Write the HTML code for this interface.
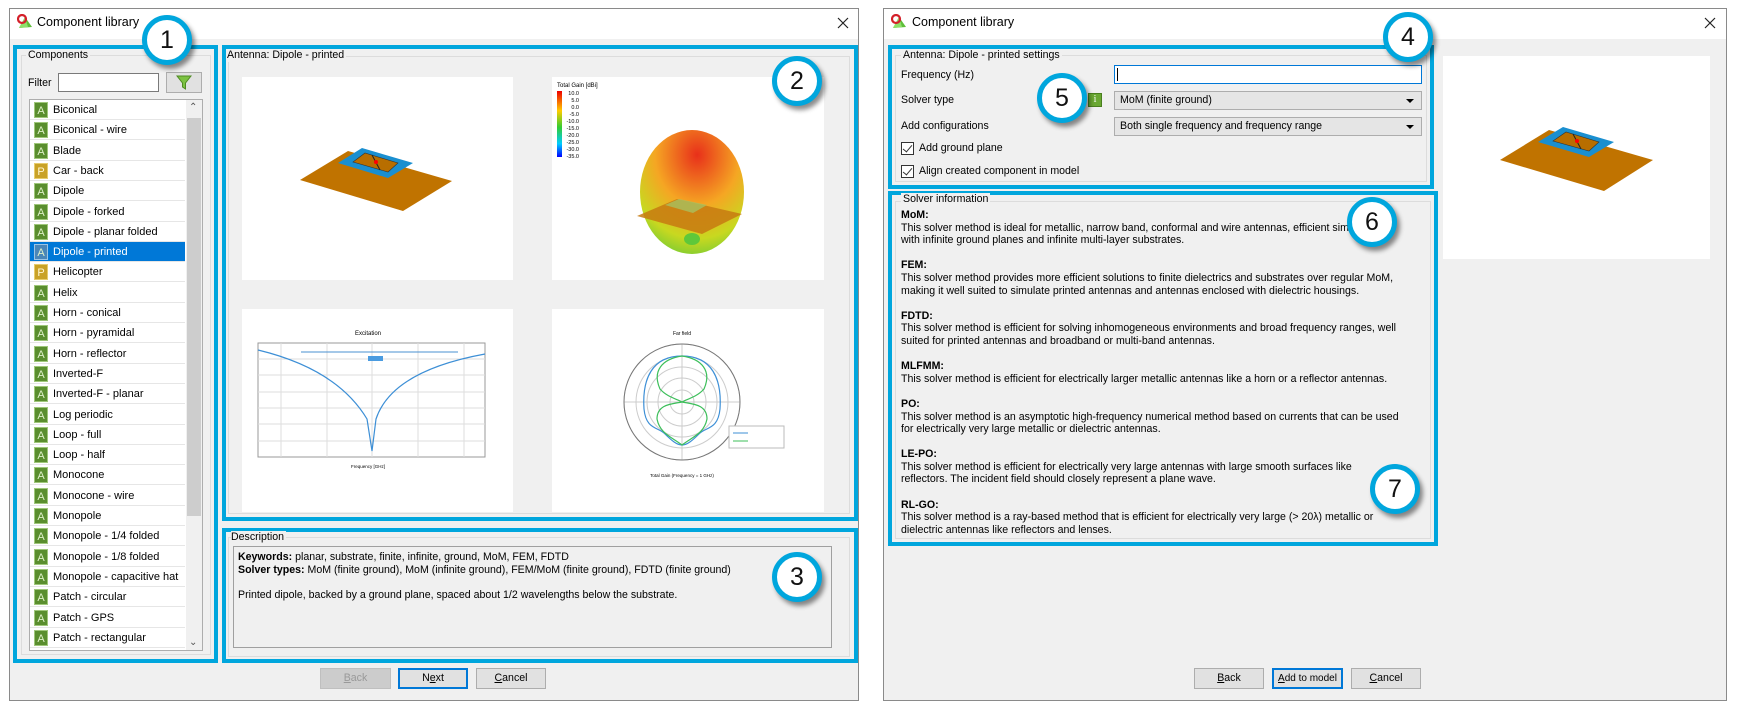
<!DOCTYPE html>
<html><head><meta charset="utf-8"><style>
*{box-sizing:border-box;margin:0;padding:0}
body{width:1741px;height:712px;background:#fff;position:relative;overflow:hidden;font-family:"Liberation Sans",sans-serif;font-size:10.6px;color:#000}
.a{position:absolute}
.t{position:absolute;white-space:nowrap;line-height:13px}
.win{position:absolute;background:#f0f0f0;border:1px solid #8a8a8a}
.tb{position:absolute;left:0;right:0;top:0;height:30px;background:#fff}
.blue{position:absolute;border:4px solid #00a6dd}
.grp{position:absolute;border:1px solid #dcdcdc}
.circ{position:absolute;width:50px;height:50px;border-radius:50%;background:#fff;border:5px solid #00a6dd;box-shadow:3px 4px 5px rgba(0,0,0,.45);font-size:25px;text-align:center;line-height:40px;color:#111}
.btn{position:absolute;height:21px;border:1px solid #adadad;background:#e1e1e1;text-align:center;line-height:19px;font-size:10.6px;white-space:nowrap}
.panel{position:absolute;background:#fff}
.row{position:absolute;left:30px;width:155px;height:20px;border-bottom:1px solid #e6e6e6;background:#fff}
.row i{position:absolute;left:4px;top:2px;width:14px;height:16px;background:#5a8e2e;color:#dff0c8;font-style:normal;font-size:11px;text-align:center;line-height:16px;border:1px solid #9fc77a}
.row i.p{background:#c9a227;border-color:#e6cc6c;color:#fff6d0}
.row span{position:absolute;left:23px;top:4px;white-space:nowrap;font-size:11px}
.combo{position:absolute;height:19px;background:#e5e5e5;border:1px solid #adadad;padding-left:5px;line-height:17px}
.combo:after{content:"";position:absolute;right:7px;top:7px;border-left:4px solid transparent;border-right:4px solid transparent;border-top:4px solid #000}
.cb{position:absolute;width:13px;height:13px;border:1px solid #333;background:#fff}
.cb:after{content:"";position:absolute;left:3px;top:0px;width:4px;height:8px;border-right:1.5px solid #333;border-bottom:1.5px solid #333;transform:rotate(40deg)}
b{font-weight:bold}
</style></head><body>

<!-- LEFT WINDOW -->
<div class="win" style="left:9px;top:8px;width:850px;height:693px">
 <div class="tb"></div>
</div>
<svg class="a" style="left:17px;top:14px" width="16" height="16" viewBox="0 0 16 16"><polygon points="8,3 15,13 2,14" fill="#5fbf3a"/><polygon points="8,3 11,13 2,14" fill="#8ee06a"/><circle cx="5" cy="5" r="4" fill="none" stroke="#d4202a" stroke-width="2.2"/></svg>
<div class="t" style="left:37px;top:16px;font-size:12.5px">Component library</div>
<svg class="a" style="left:837px;top:17px" width="12" height="12"><path d="M1 1L11 11M11 1L1 11" stroke="#222" stroke-width="1.2"/></svg>

<div class="blue" style="left:13px;top:45px;width:205px;height:618px"></div>
<div class="grp" style="left:21px;top:55px;width:190px;height:600px"></div>
<div class="t" style="left:26px;top:49px;background:#f0f0f0;padding:0 2px">Components</div>
<div class="t" style="left:28px;top:77px">Filter</div>
<div class="a" style="left:58px;top:73px;width:101px;height:19px;background:#fff;border:1px solid #7a7a7a"></div>
<div class="a" style="left:166px;top:72px;width:36px;height:21px;background:#e1e1e1;border:1px solid #adadad"></div>
<svg class="a" style="left:176px;top:74px" width="16" height="17" viewBox="0 0 16 17"><path d="M1 2 H15 L9.5 9 V15 L6.5 13 V9 Z" fill="#7cc242" stroke="#4e8a22" stroke-width="1"/></svg>

<div class="a" style="left:29px;top:99px;width:174px;height:552px;background:#fff;border:1px solid #adadad"></div>
<div class="a" style="left:186px;top:100px;width:16px;height:550px;background:#f0f0f0"></div>
<div class="a" style="left:187px;top:118px;width:14px;height:398px;background:#cdcdcd"></div>
<div class="t" style="left:189px;top:101px;font-size:10px;color:#555">⌃</div>
<div class="t" style="left:189px;top:636px;font-size:10px;color:#555">⌄</div>

<div class="row" style="top:100px"><i>A</i><span>Biconical</span></div>
<div class="row" style="top:120.3px"><i>A</i><span>Biconical - wire</span></div>
<div class="row" style="top:140.6px"><i>A</i><span>Blade</span></div>
<div class="row" style="top:160.9px"><i class="p">P</i><span>Car - back</span></div>
<div class="row" style="top:181.2px"><i>A</i><span>Dipole</span></div>
<div class="row" style="top:201.5px"><i>A</i><span>Dipole - forked</span></div>
<div class="row" style="top:221.8px"><i>A</i><span>Dipole - planar folded</span></div>
<div class="row" style="top:242.1px;background:#0078d7;color:#fff"><i style="background:#4a86b8;border-color:#9cc4e4">A</i><span>Dipole - printed</span></div>
<div class="row" style="top:262.4px"><i class="p">P</i><span>Helicopter</span></div>
<div class="row" style="top:282.7px"><i>A</i><span>Helix</span></div>
<div class="row" style="top:303px"><i>A</i><span>Horn - conical</span></div>
<div class="row" style="top:323.3px"><i>A</i><span>Horn - pyramidal</span></div>
<div class="row" style="top:343.6px"><i>A</i><span>Horn - reflector</span></div>
<div class="row" style="top:363.9px"><i>A</i><span>Inverted-F</span></div>
<div class="row" style="top:384.2px"><i>A</i><span>Inverted-F - planar</span></div>
<div class="row" style="top:404.5px"><i>A</i><span>Log periodic</span></div>
<div class="row" style="top:424.8px"><i>A</i><span>Loop - full</span></div>
<div class="row" style="top:445.1px"><i>A</i><span>Loop - half</span></div>
<div class="row" style="top:465.4px"><i>A</i><span>Monocone</span></div>
<div class="row" style="top:485.7px"><i>A</i><span>Monocone - wire</span></div>
<div class="row" style="top:506px"><i>A</i><span>Monopole</span></div>
<div class="row" style="top:526.3px"><i>A</i><span>Monopole - 1/4 folded</span></div>
<div class="row" style="top:546.6px"><i>A</i><span>Monopole - 1/8 folded</span></div>
<div class="row" style="top:566.9px"><i>A</i><span>Monopole - capacitive hat</span></div>
<div class="row" style="top:587.2px"><i>A</i><span>Patch - circular</span></div>
<div class="row" style="top:607.5px"><i>A</i><span>Patch - GPS</span></div>
<div class="row" style="top:627.8px"><i>A</i><span>Patch - rectangular</span></div>

<div class="blue" style="left:222px;top:45px;width:636px;height:476px"></div>
<div class="grp" style="left:228px;top:56px;width:622px;height:458px"></div>
<div class="t" style="left:227px;top:49px;background:#f0f0f0;padding-right:2px">Antenna: Dipole - printed</div>

<div class="panel" style="left:242px;top:77px;width:271px;height:203px">
<svg width="271" height="203"><polygon points="58,103 106,74 210,104 161,134" fill="#c07300"/><polygon points="96,86 120,71 171,86 146,101" fill="#1a8fd0"/><polygon points="111,85 123,76 156,86 146,95" fill="#b86e00" stroke="#333" stroke-width=".6"/><line x1="130" y1="78" x2="138" y2="93" stroke="#222"/><circle cx="134" cy="85" r="2" fill="red"/></svg></div>
<div class="panel" style="left:552px;top:77px;width:272px;height:203px">
<svg width="272" height="203"><defs><linearGradient id="cb" x1="0" y1="0" x2="0" y2="1"><stop offset="0" stop-color="#e00"/><stop offset=".3" stop-color="#fc0"/><stop offset=".55" stop-color="#3c3"/><stop offset=".8" stop-color="#0cf"/><stop offset="1" stop-color="#00f"/></linearGradient><radialGradient id="bl" cx=".55" cy=".2" r=".9"><stop offset="0" stop-color="#e8301a"/><stop offset=".45" stop-color="#f5a623"/><stop offset=".75" stop-color="#c8d820"/><stop offset="1" stop-color="#5ec83a"/></radialGradient></defs>
<text x="5" y="10" font-size="6" font-family="Liberation Sans">Total Gain [dBi]</text>
<rect x="5" y="14" width="5" height="66" fill="url(#cb)"/>
<g font-size="5.5" font-family="Liberation Sans" text-anchor="end"><text x="27" y="18">10.0</text><text x="27" y="25">5.0</text><text x="27" y="32">0.0</text><text x="27" y="39">-5.0</text><text x="27" y="46">-10.0</text><text x="27" y="53">-15.0</text><text x="27" y="60">-20.0</text><text x="27" y="67">-25.0</text><text x="27" y="74">-30.0</text><text x="27" y="81">-35.0</text></g>
<ellipse cx="140" cy="115" rx="52" ry="62" fill="url(#bl)"/>
<ellipse cx="140" cy="162" rx="8" ry="6" fill="#5ec83a"/>
<polygon points="85,139 125,122 190,137 150,157" fill="#c77a10" opacity=".85"/>
<polygon points="113,128 127,122 155,128 141,136" fill="#a7c060" opacity=".8"/></svg></div>
<div class="panel" style="left:242px;top:309px;width:271px;height:203px">
<svg width="271" height="203" font-family="Liberation Sans"><text x="126" y="26" font-size="6" text-anchor="middle">Excitation</text>
<rect x="16" y="34" width="227" height="114" fill="none" stroke="#999"/>
<g stroke="#ddd"><line x1="39" y1="34" x2="39" y2="148"/><line x1="85" y1="34" x2="85" y2="148"/><line x1="130" y1="34" x2="130" y2="148"/><line x1="176" y1="34" x2="176" y2="148"/><line x1="222" y1="34" x2="222" y2="148"/><line x1="16" y1="50" x2="243" y2="50"/><line x1="16" y1="66" x2="243" y2="66"/><line x1="16" y1="83" x2="243" y2="83"/><line x1="16" y1="99" x2="243" y2="99"/><line x1="16" y1="115" x2="243" y2="115"/><line x1="16" y1="132" x2="243" y2="132"/></g>
<line x1="59" y1="43" x2="216" y2="43" stroke="#4a90d0"/>
<rect x="126" y="47" width="15" height="5" fill="#4a9be0"/>
<path d="M16 41 Q95 60 125 110 L130 142 L134 110 Q150 62 243 45" fill="none" stroke="#3d8fd6" stroke-width="1.2"/>
<text x="126" y="159" font-size="4.5" text-anchor="middle">Frequency [GHz]</text></svg></div>
<div class="panel" style="left:552px;top:309px;width:272px;height:203px">
<svg width="272" height="203" font-family="Liberation Sans"><text x="130" y="26" font-size="5" text-anchor="middle">Far field</text>
<g fill="none" stroke="#ccc"><circle cx="130" cy="93" r="58"/><circle cx="130" cy="93" r="46"/><circle cx="130" cy="93" r="35"/><circle cx="130" cy="93" r="24"/><circle cx="130" cy="93" r="12"/><line x1="130" y1="35" x2="130" y2="151"/><line x1="72" y1="93" x2="188" y2="93"/></g>
<circle cx="130" cy="93" r="58" fill="none" stroke="#777"/>
<path d="M130 47 C100 47 90 70 92 100 C94 120 105 118 112 124 C120 132 125 136 130 136 C135 136 140 132 148 124 C155 118 166 120 168 100 C170 70 160 47 130 47Z" fill="none" stroke="#3d8fd6" stroke-width="1.2"/>
<path d="M130 47 C110 50 100 62 108 80 C115 88 125 90 130 93 C135 90 145 88 152 80 C160 62 150 50 130 47Z M130 93 C120 95 105 95 105 110 C108 125 120 128 130 136 C140 128 152 125 155 110 C155 95 140 95 130 93Z" fill="none" stroke="#3cbf5a" stroke-width="1.2"/>
<rect x="177" y="117" width="55" height="22" fill="#fff" stroke="#bbb"/><line x1="181" y1="124" x2="196" y2="124" stroke="#3d8fd6"/><line x1="181" y1="132" x2="196" y2="132" stroke="#3cbf5a"/>
<text x="130" y="168" font-size="4.5" text-anchor="middle">Total Gain (Frequency = 1 GHz)</text></svg></div>

<div class="blue" style="left:222px;top:528px;width:636px;height:135px"></div>
<div class="grp" style="left:228px;top:537px;width:622px;height:120px"></div>
<div class="t" style="left:231px;top:531px;background:#f0f0f0;padding-right:2px">Description</div>
<div class="a" style="left:233px;top:546px;width:599px;height:102px;border:1px solid #a0a0a0"></div>
<div class="t" style="left:238px;top:551px"><b>Keywords:</b> planar, substrate, finite, infinite, ground, MoM, FEM, FDTD</div>
<div class="t" style="left:238px;top:564px"><b>Solver types:</b> MoM (finite ground), MoM (infinite ground), FEM/MoM (finite ground), FDTD (finite ground)</div>
<div class="t" style="left:238px;top:589px">Printed dipole, backed by a ground plane, spaced about 1/2 wavelengths below the substrate.</div>

<div class="btn" style="left:320px;top:668px;width:71px;color:#999;background:#ccc;border-color:#bfbfbf"><u>B</u>ack</div>
<div class="btn" style="left:398px;top:668px;width:70px;border:2px solid #0078d7;line-height:17px">N<u>e</u>xt</div>
<div class="btn" style="left:476px;top:668px;width:70px"><u>C</u>ancel</div>

<div class="circ" style="left:142px;top:15px">1</div>
<div class="circ" style="left:772px;top:56px">2</div>
<div class="circ" style="left:772px;top:552px">3</div>

<!-- RIGHT WINDOW -->
<div class="win" style="left:883px;top:8px;width:844px;height:693px">
 <div class="tb"></div>
</div>
<svg class="a" style="left:891px;top:14px" width="16" height="16" viewBox="0 0 16 16"><polygon points="8,3 15,13 2,14" fill="#5fbf3a"/><polygon points="8,3 11,13 2,14" fill="#8ee06a"/><circle cx="5" cy="5" r="4" fill="none" stroke="#d4202a" stroke-width="2.2"/></svg>
<div class="t" style="left:912px;top:16px;font-size:12.5px">Component library</div>
<svg class="a" style="left:1704px;top:17px" width="12" height="12"><path d="M1 1L11 11M11 1L1 11" stroke="#222" stroke-width="1.2"/></svg>

<div class="panel" style="left:1443px;top:56px;width:267px;height:203px">
<svg width="267" height="203"><polygon points="57,104 106,74 210,104 161,135" fill="#c07300"/><polygon points="95,86 120,71 171,86 146,101" fill="#1a8fd0"/><polygon points="110,85 123,76 156,86 146,95" fill="#b86e00" stroke="#333" stroke-width=".6"/><line x1="130" y1="78" x2="138" y2="93" stroke="#222"/><circle cx="134" cy="85" r="2" fill="red"/></svg></div>

<div class="blue" style="left:888px;top:45px;width:546px;height:144px"></div>
<div class="grp" style="left:895px;top:55px;width:532px;height:127px"></div>
<div class="t" style="left:901px;top:49px;background:#f0f0f0;padding:0 2px">Antenna: Dipole - printed settings</div>
<div class="t" style="left:901px;top:69px">Frequency (Hz)</div>
<div class="a" style="left:1114px;top:65px;width:308px;height:19px;background:#fff;border:1px solid #0078d7"></div>
<div class="a" style="left:1117px;top:68px;width:1px;height:13px;background:#000"></div>
<div class="t" style="left:901px;top:94px">Solver type</div>
<div class="a" style="left:1088px;top:93px;width:14px;height:14px;background:#6aa832;border:1px solid #4a7f1e;color:#fff;font-size:10px;text-align:center;line-height:12px;font-family:'Liberation Serif',serif">i</div>
<div class="combo" style="left:1114px;top:91px;width:308px">MoM (finite ground)</div>
<div class="t" style="left:901px;top:120px">Add configurations</div>
<div class="combo" style="left:1114px;top:117px;width:308px">Both single frequency and frequency range</div>
<div class="cb" style="left:901px;top:142px"></div>
<div class="t" style="left:919px;top:142px">Add ground plane</div>
<div class="cb" style="left:901px;top:165px"></div>
<div class="t" style="left:919px;top:165px">Align created component in model</div>

<div class="blue" style="left:888px;top:191px;width:550px;height:355px"></div>
<div class="grp" style="left:895px;top:201px;width:536px;height:338px"></div>
<div class="t" style="left:901px;top:193px;background:#f0f0f0;padding:0 2px">Solver information</div>
<div class="a" style="left:1372px;top:199px;width:15px;height:15px;border-radius:50%;background:#7ab648;color:#fff;font-size:10px;font-weight:bold;text-align:center;line-height:15px">?</div>
<div class="t" style="left:901px;top:209px;line-height:12.6px">
<b>MoM:</b><br>This solver method is ideal for metallic, narrow band, conformal and wire antennas, efficient simulations<br>with infinite ground planes and infinite multi-layer substrates.<br><br>
<b>FEM:</b><br>This solver method provides more efficient solutions to finite dielectrics and substrates over regular MoM,<br>making it well suited to simulate printed antennas and antennas enclosed with dielectric housings.<br><br>
<b>FDTD:</b><br>This solver method is efficient for solving inhomogeneous environments and broad frequency ranges, well<br>suited for printed antennas and broadband or multi-band antennas.<br><br>
<b>MLFMM:</b><br>This solver method is efficient for electrically larger metallic antennas like a horn or a reflector antennas.<br><br>
<b>PO:</b><br>This solver method is an asymptotic high-frequency numerical method based on currents that can be used<br>for electrically very large metallic or dielectric antennas.<br><br>
<b>LE-PO:</b><br>This solver method is efficient for electrically very large antennas with large smooth surfaces like<br>reflectors. The incident field should closely represent a plane wave.<br><br>
<b>RL-GO:</b><br>This solver method is a ray-based method that is efficient for electrically very large (&gt; 20λ) metallic or<br>dielectric antennas like reflectors and lenses.</div>

<div class="btn" style="left:1194px;top:668px;width:70px"><u>B</u>ack</div>
<div class="btn" style="left:1272px;top:668px;width:71px;border:2px solid #0078d7;line-height:17px;font-size:10px"><u>A</u>dd to model</div>
<div class="btn" style="left:1351px;top:668px;width:70px"><u>C</u>ancel</div>

<div class="circ" style="left:1383px;top:12px">4</div>
<div class="circ" style="left:1037px;top:73px">5</div>
<div class="circ" style="left:1347px;top:197px">6</div>
<div class="circ" style="left:1370px;top:464px">7</div>
</body></html>
